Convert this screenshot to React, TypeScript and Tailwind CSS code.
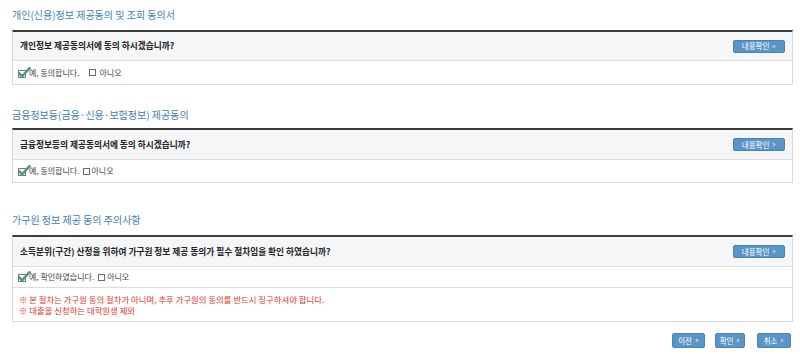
import type { ReactNode } from "react";

const FONT = "font-['Noto_Sans_CJK_KR','Noto_Sans',sans-serif]";

function CheckedBox() {
  return (
    <svg width="13" height="12" viewBox="0 0 13 12" className="shrink-0 -mr-[2px]">
      <rect x="0.5" y="3.5" width="7" height="7" fill="#fff" stroke="#7a7a7a" />
      <path d="M1.5 6.5 L4 9.5 L11.5 1.2" fill="none" stroke="#4f9a78" strokeWidth="2.6" strokeLinecap="round" strokeLinejoin="round" />
    </svg>
  );
}

function EmptyBox() {
  return <span className="inline-block w-[7px] h-[7px] border border-[#6b6b6b] bg-white shrink-0" />;
}

function BlueButton({ children, className = "" }: { children: ReactNode; className?: string }) {
  return (
    <button
      className={`flex items-center justify-center gap-[3px] rounded-[2px] bg-[#5b95c6] border border-[#4a84b5] text-white leading-none ${className}`}
    >
      <span>{children}</span>
      <span className="text-[7px] scale-x-75">&gt;</span>
    </button>
  );
}

type PanelProps = {
  question: string;
  yes: string;
  qh: string;
  ah: string;
  gap?: string;
  children?: ReactNode;
};

function Panel({ question, yes, qh, ah, gap = "gap-[3px]", children }: PanelProps) {
  return (
    <div className="border-t-2 border-t-[#3b3b3b] border-x border-x-[#dadada]">
      <div className={`flex items-center justify-between bg-[#f5f6f8] border-b border-[#dcdcdc] pl-[7px] pr-[7px] ${qh}`}>
        <span className="text-[8.7px] font-bold text-[#222]">{question}</span>
        <BlueButton className="w-[52px] h-[13px] text-[7.5px]">내용확인</BlueButton>
      </div>
      <div className={`flex items-center border-b border-[#dcdcdc] pl-[5px] text-[8px] text-[#444] ${ah}`}>
        <CheckedBox />
        <span className="mr-[4px]">{yes}</span>
        <span className={`flex items-center ${gap}`}>
          <EmptyBox />
          <span>아니오</span>
        </span>
      </div>
      {children}
    </div>
  );
}

export default function App() {
  return (
    <div className={`w-[800px] h-[354px] bg-white pl-3 pr-[7px] ${FONT}`}>
      <h2 className="mt-[8px] mb-[8px] h-[14px] leading-[14px] text-[10px] text-[#3f80b6]">
        개인(신용)정보 제공동의 및 조회 동의서
      </h2>
      <Panel
        question="개인정보 제공동의서에 동의 하시겠습니까?"
        yes="예, 동의합니다."
        qh="h-[29px]"
        ah="h-[24px]"
        gap="gap-[3px] ml-[6px]"
      />

      <h2 className="mt-[23px] mb-[6px] h-[14px] leading-[14px] text-[10px] text-[#3f80b6]">
        금융정보등(금융·신용·보험정보) 제공동의
      </h2>
      <Panel
        question="금융정보등의 제공동의서에 동의 하시겠습니까?"
        yes="예, 동의합니다."
        qh="h-[30px]"
        ah="h-[23px]"
        gap="gap-[1px]"
      />

      <h2 className="mt-[30px] mb-[8px] h-[14px] leading-[14px] text-[10px] text-[#3f80b6]">
        가구원 정보 제공 동의 주의사항
      </h2>
      <Panel
        question="소득분위(구간) 산정을 위하여 가구원 정보 제공 동의가 필수 절차임을 확인 하였습니까?"
        yes="예, 확인하였습니다."
        qh="h-[30px]"
        ah="h-[21px]"
        gap="gap-[2px]"
      >
        <div className="flex flex-col justify-center h-[34px] border-b border-[#dcdcdc] pl-[6px] text-[8.4px] leading-[11px] text-[#e8332a]">
          <p>※ 본 절차는 가구원 동의 절차가 아니며, 추후 가구원의 동의를 반드시 징구하셔야 합니다.</p>
          <p>※ 대출을 신청하는 대학원생 제외</p>
        </div>
      </Panel>

      <div className="mt-[11px] flex justify-end items-center pr-[2px]">
        <BlueButton className="w-[33px] h-[15px] text-[7.5px]">이전</BlueButton>
        <BlueButton className="ml-[10px] w-[30px] h-[15px] text-[7.5px]">확인</BlueButton>
        <BlueButton className="ml-[12px] w-[34px] h-[15px] text-[7.5px]">취소</BlueButton>
      </div>
    </div>
  );
}
